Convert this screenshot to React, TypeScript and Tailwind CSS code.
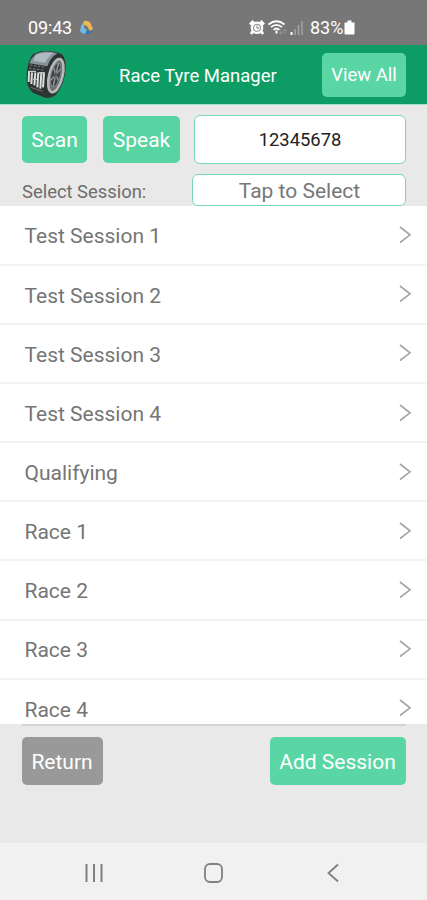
import clsx from 'clsx';
import type { ReactNode } from 'react';

const sessions = [
  'Test Session 1',
  'Test Session 2',
  'Test Session 3',
  'Test Session 4',
  'Qualifying',
  'Race 1',
  'Race 2',
  'Race 3',
  'Race 4',
];

function Button({ className, children }: { className?: string; children: ReactNode }) {
  return (
    <button
      type="button"
      className={clsx(
        'flex shrink-0 items-center justify-center whitespace-nowrap rounded-[5px] pt-[3px] text-white',
        className,
      )}
    >
      {children}
    </button>
  );
}

function TyreLogo() {
  return (
    <svg className="h-[51px] w-[44px] shrink-0" viewBox="72 147 132 153" aria-hidden="true">
      <path
        d="M96 166Q110 155 130 153Q165 152 185 162Q198 176 197 205Q194 252 168 284Q150 298 132 292L100 279Q84 266 80 242Q78 196 96 166Z"
        fill="#303334"
      />
      <path d="M97 173Q108 157 130 155Q155 154 172 160Q150 174 142 199L88 190Q91 180 97 173Z" fill="#87939a" />
      <path d="M107 164Q128 156 160 159Q143 171 136 188L100 182Z" fill="#b0bac1" />
      <path d="M90 195L134 202M87 204L131 211" stroke="#7d8588" strokeWidth="3" strokeDasharray="7 5" />
      <path d="M87 214L86 246M96 217L94 252M106 217L103 256M115 218L112 262M124 219L121 266M132 219L129 262" stroke="#dcdede" strokeWidth="6" />
      <path d="M84 214H108M115 218H134M99 238H112" stroke="#c2c6c6" strokeWidth="4" />
      <path d="M92 262L128 274" stroke="#6c7374" strokeWidth="3" />
      <g transform="rotate(14 168 225)">
        <ellipse cx="168" cy="227" rx="20" ry="51" fill="#6a6e70" stroke="#b6b9b8" strokeWidth="8" />
        <ellipse cx="167" cy="225" rx="14" ry="37" fill="#3e4245" stroke="#7d8386" strokeWidth="3" />
        <path
          d="M167 225V189M167 225L178 203M167 225L179 239M167 225L168 261M167 225L156 245M167 225L156 205"
          stroke="#959b9f"
          strokeWidth="4"
        />
        <ellipse cx="167" cy="225" rx="5" ry="8" fill="#555c61" />
      </g>
    </svg>
  );
}

function StatusBar() {
  return (
    <div className="flex h-[45px] items-start bg-[#777777] pl-7 pt-[18px] text-white">
      <span className="w-[51px] text-[18px] leading-[20px] tracking-[-0.15px]">09:43</span>
      <svg className="mt-[2px] h-[15px] w-[15px]" viewBox="0 0 15 15" aria-hidden="true">
        <path d="M5 1L2 6L1 11Q3 14 6 14L8 10L5 8Z" fill="#70bce4" />
        <path d="M5 1Q10 0 12 4L14 9L11 11L8 6L5 5Z" fill="#efb650" />
        <path d="M14 10Q12 15 6 14L8 10L11 11Z" fill="#3976ad" />
      </svg>
      <div className="ml-[155px] flex items-start">
        <svg className="mt-[2px] h-[15px] w-[16px]" viewBox="0 0 16 15" aria-hidden="true">
          <path d="M1 4.5L4.5 1M11.5 1L15 4.5M4 11L2 14M12 11L14 14" stroke="white" strokeWidth="2.8" />
          <circle cx="8" cy="7.8" r="6.3" fill="white" />
          <circle cx="8" cy="7.8" r="3.5" fill="none" stroke="#909090" strokeWidth="1.1" />
          <path d="M8 5.5V8.2H10" fill="none" stroke="#777" strokeWidth="1" />
        </svg>
        <svg className="ml-[3px] mt-[2px] h-[15px] w-[19px]" viewBox="0 0 19 15" fill="none" stroke="white" aria-hidden="true">
          <path d="M0.5 4.5Q8.5-2 16.5 4.5M3 7.2Q8.500 2.500 14 7.200M5.500 9.800Q8.500 7.200 11.500 9.800" strokeWidth="1.7" />
          <path d="M8.5 10.5V13.5" strokeWidth="2" />
          <path d="M13 9V14M11.5 12L13 14L14.5 12M17 14V9M15.5 11L17 9L18.5 11" stroke="#a0a0a0" strokeWidth="0.8" />
        </svg>
        <svg className="ml-[3px] mt-[2px] h-[15px] w-[14px]" viewBox="0 0 14 15" aria-hidden="true">
          <path d="M1.5 12V15" stroke="white" strokeWidth="2" />
          <path d="M5 9V15M8.5 5V15M12 1V15" stroke="#a5a5a5" strokeWidth="1.5" />
        </svg>
        <span className="ml-[6px] text-[18px] leading-[20px]">83%</span>
        <svg className="ml-px mt-[2px] h-[15px] w-[11px]" viewBox="0 0 11 14" aria-hidden="true">
          <path d="M3.5 0H7.5V2H10.5V13Q10.5 14 9.5 14H1.5Q0.5 14 0.5 13V2H3.5Z" fill="white" />
        </svg>
      </div>
    </div>
  );
}

function SessionRow({ name }: { name: string }) {
  return (
    <li className="flex h-[59.15px] shrink-0 items-center justify-between border-b-2 border-[#f3f3f3] pl-[24.5px] pr-[15px]">
      <span className="pt-[4px] text-[21px] text-[#757575]">{name}</span>
      <svg className="h-[18px] w-[14px]" viewBox="0 0 14 18" fill="none" aria-hidden="true">
        <path d="M2 1L12 8.8L2 16.5" stroke="#a6a6a6" strokeWidth="1.7" />
      </svg>
    </li>
  );
}

export default function App() {
  return (
    <div className="flex h-[900px] w-[427px] flex-col overflow-hidden bg-[#e9e9e9] font-['Roboto',sans-serif]">
      <StatusBar />
      <header className="flex h-[60px] shrink-0 items-center border-b border-[#a3e3cb] bg-[#0d9d64] pl-6 pr-[21px]">
        <TyreLogo />
        <h1 className="ml-[51px] whitespace-nowrap pt-[4px] text-[18.5px] text-white">Race Tyre Manager</h1>
        <Button className="ml-auto h-[44px] w-[84px] bg-[#5ad6a5] text-[18.5px]">View All</Button>
      </header>

      <section className="h-[101px] shrink-0 pl-[22px] pr-[21px] pt-[10px]">
        <div className="flex items-center">
          <Button className="h-[47px] w-[65px] bg-[#57d4a2] text-[21px]">Scan</Button>
          <Button className="ml-4 h-[47px] w-[77px] bg-[#57d4a2] text-[21px]">Speak</Button>
          <div className="ml-auto flex h-[49px] w-[212px] items-center justify-center rounded-md border-[1.5px] border-[#78d8b5] bg-white text-[18.4px] text-[#222]">
            12345678
          </div>
        </div>
        <div className="mt-[10px] flex items-center justify-between">
          <span className="whitespace-nowrap pt-[4px] text-[18.4px] text-[#6d6d6d]">Select Session:</span>
          <div className="flex h-8 w-[214px] items-center justify-center rounded-md border-[1.5px] border-[#78d8b5] bg-white pl-px pt-[3px] text-[21px] text-[#777]">
            Tap to Select
          </div>
        </div>
      </section>

      <ul className="flex h-[518px] shrink-0 flex-col overflow-hidden bg-white pt-[0.6px]">
        {sessions.map((name) => (
          <SessionRow key={name} name={name} />
        ))}
      </ul>

      <footer className="h-[119px] shrink-0 px-[21.5px]">
        <div className="h-[2px] bg-[#d3d3d3]" />
        <div className="mt-[11px] flex justify-between">
          <Button className="h-[48px] w-[81px] bg-[#999999] text-[21px]">Return</Button>
          <Button className="h-[48px] w-[136px] bg-[#5ad6a5] text-[21px]">Add Session</Button>
        </div>
      </footer>

      <nav className="flex h-[57px] shrink-0 items-center justify-between bg-[#f1f1f1] pl-[84px] pr-[84px] pt-[3px]">
        <svg className="h-5 w-5" viewBox="0 0 20 20" aria-hidden="true">
          <path d="M2.5 1V19M10 1V19M17.5 1V19" stroke="#808080" strokeWidth="2" />
        </svg>
        <svg className="h-5 w-5" viewBox="0 0 20 20" fill="none" aria-hidden="true">
          <rect x="1" y="1" width="17" height="18" rx="5" stroke="#808080" strokeWidth="1.8" />
        </svg>
        <svg className="h-5 w-5" viewBox="0 0 20 20" fill="none" aria-hidden="true">
          <path d="M15 1.5L5.500 10L15 18.5" stroke="#808080" strokeWidth="1.8" />
        </svg>
      </nav>
    </div>
  );
}
